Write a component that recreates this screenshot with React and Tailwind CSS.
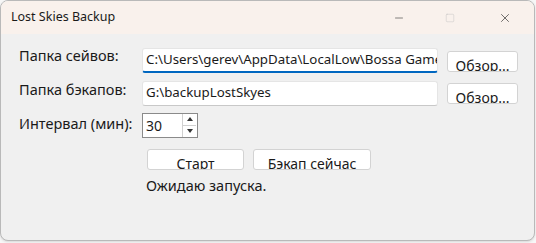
import { Minus, Square, X } from "lucide-react";

const font = { fontFamily: '"Noto Sans", "Open Sans", sans-serif' };

function Field({ value, focused }) {
  return (
    <div
      className={
        "h-[25px] w-[296px] bg-white rounded-[3px] border border-[#e5e5e5] flex items-center pl-[3px] overflow-hidden whitespace-nowrap text-[13.3px] text-[#1a1a1a] " +
        (focused ? "border-b-2 border-b-[#0067c0]" : "border-b-[#c8c8c8]")
      }
    >
      {value}
    </div>
  );
}

function ClippedButton({ label, className }) {
  return (
    <div
      className={
        "h-[21px] bg-white rounded-[3px] border border-[#d3d3d3] overflow-hidden flex justify-center text-[14px] text-[#1a1a1a] " +
        className
      }
    >
      <span className="pt-[5px] leading-[18px] whitespace-nowrap">{label}</span>
    </div>
  );
}

export default function App() {
  return (
    <div className="w-[536px] h-[243px] bg-[#f7f7f7]" style={font}>
      <div className="w-[535px] h-[241px] rounded-[8px] border border-[#b9b9b9] overflow-hidden flex flex-col bg-[#f0f0f0] shadow-sm">
        <div className="h-[33px] bg-[#f9f1ec] flex items-center pl-[10px] text-[12.5px] text-[#1a1a1a]">
          <span className="flex-1">Lost Skies Backup</span>
          <div className="flex items-center h-full">
            <div className="w-[46px] flex justify-center">
              <Minus size={12} strokeWidth={1.1} className="text-[#222]" />
            </div>
            <div className="w-[56px] flex justify-center">
              <Square size={10} strokeWidth={1} className="text-[#bdbdbd]" />
            </div>
            <div className="w-[56px] flex justify-center pr-[2px]">
              <X size={14} strokeWidth={1.1} className="text-[#222]" />
            </div>
          </div>
        </div>

        <div className="flex-1 pl-[18px] pt-[14px] text-[14.5px] text-[#1a1a1a]">
          <div className="flex items-center h-[25px]">
            <span className="w-[123px] -mt-[9px]">Папка сейвов:</span>
            <Field value="C:\Users\gerev\AppData\LocalLow\Bossa Games\LostSkies" focused />
            <ClippedButton label="Обзор..." className="ml-[9px] w-[71px] mt-[1px]" />
          </div>

          <div className="flex items-center h-[24px] mt-[8px]">
            <span className="w-[123px] -mt-[7px]">Папка бэкапов:</span>
            <Field value="G:\backupLostSkyes" />
            <ClippedButton label="Обзор..." className="ml-[9px] w-[71px] mt-[1px]" />
          </div>

          <div className="flex items-center h-[26px] mt-[7px]">
            <span className="w-[123px] -mt-[2px]">Интервал (мин):</span>
            <div className="h-[25px] w-[56px] bg-white border border-[#8a8a8a] flex text-[14px]">
              <span className="flex-1 pl-[3px] pt-[3px] leading-[18px]">30</span>
              <div className="w-[14px] flex flex-col border-l border-[#d0d0d0] mr-[1px]">
                <div className="flex-1 flex items-center justify-center border-b border-[#d0d0d0]">
                  <span className="w-0 h-0 border-l-[3px] border-r-[3px] border-b-[4px] border-l-transparent border-r-transparent border-b-[#333]"></span>
                </div>
                <div className="flex-1 flex items-center justify-center">
                  <span className="w-0 h-0 border-l-[3px] border-r-[3px] border-t-[4px] border-l-transparent border-r-transparent border-t-[#333]"></span>
                </div>
              </div>
            </div>
          </div>

          <div className="flex ml-[128px] mt-[11px]">
            <ClippedButton label="Старт" className="w-[97px]" />
            <ClippedButton label="Бэкап сейчас" className="w-[118px] ml-[9px]" />
          </div>

          <div className="ml-[127px] mt-[5px]">Ожидаю запуска.</div>
        </div>
      </div>
    </div>
  );
}
